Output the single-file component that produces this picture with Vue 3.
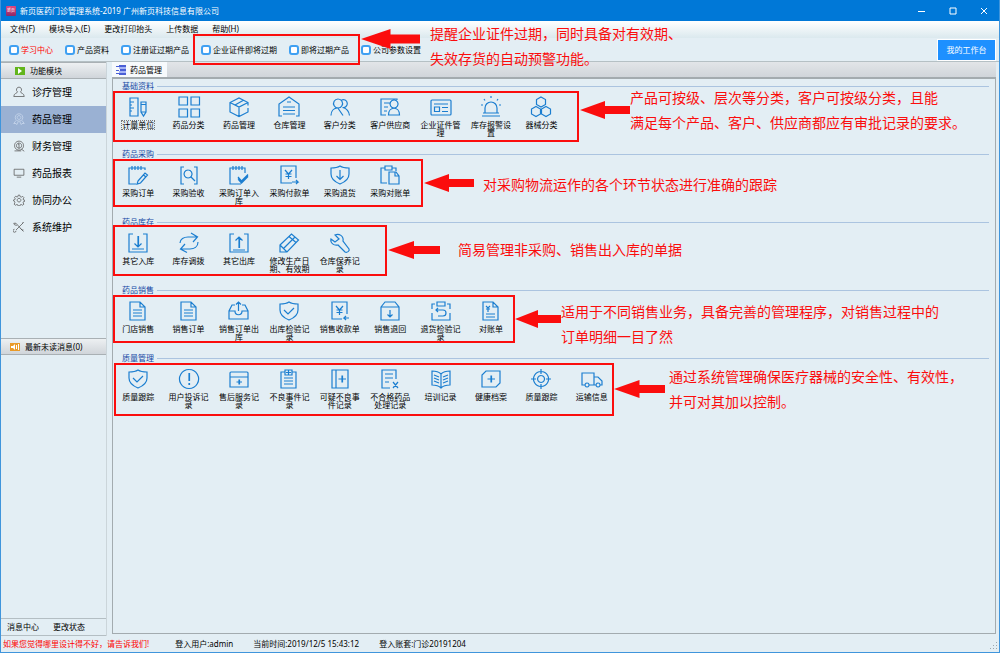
<script setup>
const menus = ['文件(F)', '模块导入(E)', '更改打印抬头', '上传数据', '帮助(H)']
const shortcuts = ['学习中心', '产品资料', '注册证过期产品', '企业证件即将过期', '即将过期产品', '公司参数设置']

const modules = [
  { name: '诊疗管理', d: 'M8 1.5a3.5 3.5 0 0 1 2 6.3c0 2 5 1.700 5 6.200H1c0-4.500 5-4.200 5-6.200a3.500 3.500 0 0 1 2-6.300z' },
  { name: '药品管理', active: true, d: 'M8 1a5 5 0 1 0 .1 0M8 3.500a2.500 2.500 0 1 0 .1 0M4 10l-3 4 3 0L5 15.500l2-4M12 10l3 4-3 0L11 15.500l-2-4' },
  { name: '财务管理', d: 'M8 1.500a6 6 0 1 0 .1 0M8 4a3.500 3.500 0 1 0 .1 0M8 5v6M6.500 6L8 5M11 12l4 3M2 14.500h9' },
  { name: '药品报表', d: 'M1.500 3h13v8h-13zM5 13.500h6' },
  { name: '协同办公', d: 'M7 1.500h2l.5 2 1.500.7 2-1 1.500 1.500-1 2 .5 1.300 2 .5v1l-2 .7-.5 1.500 1 1.800-1.500 1.500-2-1-1.500.5-.5 1.500H7l-.5-1.500-1.500-.5-2 1-1.500-1.500 1-1.800L2 9.700l-1.500-.7v-1L2.500 7.500 3 6.500 2 4.500 3.500 3l2 1L6.500 3.500zM8 5.700a2.500 2.500 0 1 0 .1 0' },
  { name: '系统维护', d: 'M1 3l3 0 8 9 2 0M14 2L4 12M12 3l2-1M10 10l4 4M2 11a2 2 0 1 0 2 2M1 3l1 2 3 1' }
]

const sheet = 'M2 1h10l5 5v13H2zM12 1v5h5'
const shield = 'M10 1c3 2 6 2 9 2v6c0 5-4 8-9 10C5 17 1 14 1 9V3c3 0 6 0 9-2z'

const groups = [
  {
    title: '基础资料',
    tools: [
      { name: '计量单位', focus: true, d: 'M2 1h8v18H2zM2 5h4M2 8h2M2 11h4M2 14h2M13 5h5v10l-2.500 4-2.500-4zM13 7.500h5M13 15h5' },
      { name: '药品分类', d: 'M0 0h8.500v8H0zM12 0h8.500v8H12zM0 12h8.500v8H0zM12 12h8.500v8H12z' },
      { name: '药品管理', d: 'M19 11v4l-9 4.500L1 15V5.500L10 1l9 4.500v3M1 5.500l9 4.500 9-4.500M10 10v9.500M6 8l8-4.500' },
      { name: '仓库管理', d: 'M3 19H0V7l10-7 10 7v12h-3M4 10h12M4 13.500h12M4 17h12M8 5h4' },
      { name: '客户分类', d: 'M8 2a4.500 4.500 0 1 0 .1 0M1 18.500c0-4 2.500-7 6-7.500M11.500 3a4 4 0 1 1 1 7.500M7.500 10.500L13 18.500M13 10.500c3.500 1 6 4 6.500 8' },
      { name: '客户供应商', d: 'M17 3V2H1v16h5M4 6h6M4 10h4M4 14h3M14 3a4 4 0 1 0 .1 0M8.500 18c0-9 11-9 11 0z' },
      { name: '企业证件管理', d: 'M1 3h18a1 1 0 0 1 1 1v13a1 1 0 0 1-1 1H1a1 1 0 0 1-1-1V4a1 1 0 0 1 1-1zM3 7h14M3.500 10h5v4.500h-5zM11 10.500h6M11 14.500h6' },
      { name: '库存报警设置', d: 'M4 16v-5a6 6 0 0 1 12 0v5M2 16h16M1 19h18M10-1v2M3 2l1 1.500M17 2l-1 1.500M0 8h2M18 8h2' },
      { name: '器械分类', d: 'M10 0l4.500 2.500v5L10 10 5.500 7.500v-5zM5 9.500l4.500 2.500v5L5 19.500.5 17v-5zM15 9.500l4.500 2.500v5L15 19.500 10.500 17v-5z' }
    ]
  },
  {
    title: '药品采购',
    tools: [
      { name: '采购订单', d: 'M17 5V3H1v16h7M4 1v4M7 1v4M10 1v4M13 1v4M10 16l7-8 2.500 2-7 8-3.500 1zM15.500 10l2.500 2' },
      { name: '采购验收', d: 'M5 2H2v17h3M15 2h3v17h-3M9 5a4 4 0 1 0 .1 0M12 12l4 4' },
      { name: '采购订单入库', d: 'M16 8V3H1v16h11M4 1v4M7 1v4M10 1v4M13 1v4M9 12l3.500 4L19 9.500M9 13l3.500 4L19 10.500M9 14l3.500 4L19 11.500' },
      { name: '采购付款单', d: 'M13 18H2V1h15v12M6 5l3.500 4L13 5M9.500 9v5M6.500 9h6M6.500 11.500h6M13 17h6l-2-2M19 17l-2 2' },
      { name: '采购退货', d: shield + 'M10 5v9M6.500 11l3.500 3.500 3.500-3.500' },
      { name: '采购对账单', d: 'M5 3H1v15h6M5 1h7v4H5zM12 3h4v3M9 7h7l3 4v8H9zM15 7v4h4' }
    ]
  },
  {
    title: '药品库存',
    tools: [
      { name: '其它入库', d: 'M5 1H1v18h18V1h-4M10 3v11M10.500 3v11M6.500 10.500L10 14l3.500-3.500M4 16h12' },
      { name: '库存调拨', d: 'M1 10c0-4 4-6 8-6h9M12 0l6.500 4L14 9M19 9c0 5-4 7-8 7H2M8 19.500L1.500 16 6 11' },
      { name: '其它出库', d: 'M5 1H1v18h18V1h-4M10 15V4M10.500 15V4M6.500 7.500L10 4l3.500 3.500M4 17h12' },
      { name: '修改生产日期、有效期', d: 'M1 12L12.500 1l7 6L8 19H1zM1 12l7 7M4.500 15.500L16 4M10 3.500l7 6' },
      { name: '仓库保养记录', d: 'M5 2c4-2 9 1 8 6l6 8c1 2-2 4-4 3l-7-7C4 13 0 10 1 6l4 3 4-3z' }
    ]
  },
  {
    title: '药品销售',
    tools: [
      { name: '门店销售', d: sheet + 'M5 9h9M5 12h9M5 15h9' },
      { name: '销售订单', d: sheet + 'M5 9h9M5 12h9M5 15h9' },
      { name: '销售订单出库', d: 'M6 4H3L0 10v8h19v-8l-3-6h-3M0 10h6c0 5 7 5 7 0h6M9.500 10V1M7 3.500L9.500 1 12 3.500' },
      { name: '出库检验记录', d: shield + 'M5 9l4 4 6-6' },
      { name: '销售收款单', d: 'M12 18H2V1h15v12M6 5l3.500 4L13 5M9.500 9v5M6.500 9h6M6.500 11.500h6M19 17h-5l2-2M14 17l2 2' },
      { name: '销售退回', d: 'M1 6l4-5h10l4 5v13H1zM1 6h18M10 9v7M7.500 13.500L10 16l2.500-2.500' },
      { name: '退货检验记录', d: 'M4 3H1v5M1 12v7h18v-7M19 8V3h-3M6 1h8v4H6zM5 9h7c4 0 4 6 0 6H7M7 7L5 9l2 2' },
      { name: '对账单', d: sheet + 'M5 5l2 2 2-2M7 7v4M5 8h4M5 13h9M5 16h9' }
    ]
  },
  {
    title: '质量管理',
    tools: [
      { name: '质量跟踪', d: shield + 'M5 9l4 4 6-6' },
      { name: '用户投诉记录', d: 'M10 .5a9.500 9.500 0 1 0 .1 0M10 4v8M10.500 4v8M10 14v2M10.500 14v2' },
      { name: '售后服务记录', d: 'M2 3h16a1 1 0 0 1 1 1v14H1V4a1 1 0 0 1 1-1zM1 8h18M10 10.500v5M10.500 10.500v5M7.500 13h5.500' },
      { name: '不良事件记录', d: 'M6 3H2v16h15V3h-4M6 1h7v5H6zM9.500 1v5M7 3.500h5M5 9h9M5 12h9M5 15h9' },
      { name: '可疑不良事件记录', d: 'M2 1h16v18H2zM6 1v18M12 6.500v7M12.500 6.500v7M8.500 10h7.500' },
      { name: '不合格药品处理记录', d: 'M10 19H2V1h14v9M5 5h8M5 9h8M5 13h4M13 13l5 6M18 13l-5 6' },
      { name: '培训记录', d: 'M10 5C7 2 4 2 1 2v14c3 0 6 0 9 3 3-3 6-3 9-3V2c-3 0-6 0-9 3zM10 5v14M3 6l5 2M3 9l5 2M3 12l5 2M17 6l-5 2M17 9l-5 2M17 12l-5 2' },
      { name: '健康档案', d: 'M5 2h14v12l-4 4H1V6zM10 6.500v7M10.500 6.500v7M6.500 10h7.500' },
      { name: '质量跟踪', d: 'M10 2.500a7.500 7.500 0 1 0 .1 0M10 6.500a3.500 3.500 0 1 0 .1 0M10 0v5M10 15v5M0 10h5M15 10h5' },
      { name: '运输信息', d: 'M3 16H0V4h12v12H7M12 8h4l4 4v4h-2M12 16h2M5 14a2 2 0 1 0 .1 0M16 14a2 2 0 1 0 .1 0' }
    ]
  }
]

const notes = [
  { id: 'expire', lines: ['提醒企业证件过期，同时具备对有效期、', '失效存货的自动预警功能。'] },
  { id: 'basic', lines: ['产品可按级、层次等分类，客户可按级分类，且能', '满足每个产品、客户、供应商都应有审批记录的要求。'] },
  { id: 'purchase', lines: ['对采购物流运作的各个环节状态进行准确的跟踪'] },
  { id: 'stock', lines: ['简易管理非采购、销售出入库的单据'] },
  { id: 'sales', lines: ['适用于不同销售业务，具备完善的管理程序，对销售过程中的', '订单明细一目了然'] },
  { id: 'quality', lines: ['通过系统管理确保医疗器械的安全性、有效性，', '并可对其加以控制。'] }
]
</script>

<template>
  <div class="window">
    <header class="titlebar">
      <span class="logo">新页</span>
      <h1>新页医药门诊管理系统-2019 广州新页科技信息有限公司</h1>
      <div class="controls">
        <button aria-label="最小化"><svg viewBox="0 0 10 10"><path d="M1 5.500h7" /></svg></button>
        <button aria-label="最大化"><svg viewBox="0 0 10 10"><path d="M2 2h6v6H2z" /></svg></button>
        <button aria-label="关闭"><svg viewBox="0 0 10 10"><path d="M2 2l6 6M8 2L2 8" /></svg></button>
      </div>
    </header>

    <nav class="menubar">
      <button v-for="m in menus" :key="m">{{ m }}</button>
    </nav>

    <div class="toolbar">
      <button v-for="(s, i) in shortcuts" :key="s" :class="{ hot: i === 0 }">
        <svg viewBox="0 0 10 10"><rect x="1" y="1" width="8" height="8" rx="2" /></svg>{{ s }}
      </button>
      <button class="desk">我的工作台</button>
    </div>

    <div class="body">
      <aside class="side">
        <h2 class="side-head">
          <svg viewBox="0 0 10 10"><path fill="#62b51b" d="M0 1h10v8H0z" /><path fill="#fff" d="M3 2l4 3-4 3z" /></svg>功能模块
        </h2>
        <nav class="modules">
          <button v-for="m in modules" :key="m.name" :class="{ active: m.active }">
            <svg viewBox="0 0 16 16"><path :d="m.d" /></svg>{{ m.name }}
          </button>
        </nav>
        <h2 class="side-head news">
          <svg viewBox="0 0 10 10"><path fill="#e99a28" d="M0 1h10v8H0z" /><path fill="#fff" d="M1 4h2l2-2v6L3 6H1zM6 3h1v4H6zM8 2h1v6H8z" /></svg>最新未读消息(0)
        </h2>
        <div class="messages"></div>
        <div class="side-foot">
          <button>消息中心</button>
          <button>更改状态</button>
        </div>
      </aside>

      <main class="work">
        <div class="tabs">
          <button class="tab">
            <svg viewBox="0 0 10 10"><path fill="#4a5fd6" d="M3 0h7v2H3zM4 4h6v2H4zM3 8h7v2H3zM0 1h3v1H0zM0 5h3v1H0zM0 8h3v1H0z" /><path fill="#a7b5f5" d="M3 2h7v2H3zM3 6h7v2H3z" /></svg>药品管理
          </button>
        </div>
        <div class="panel">
          <section v-for="g in groups" :key="g.title" class="group">
            <h3>{{ g.title }}</h3>
            <div class="tools">
              <button v-for="(t, i) in g.tools" :key="i" class="tool" :class="{ focus: t.focus }">
                <svg viewBox="0 0 20 20"><path :d="t.d" /></svg>
                <span>{{ t.name }}</span>
              </button>
            </div>
          </section>
        </div>
      </main>
    </div>

    <footer class="status">
      <span class="hot">如果您觉得哪里设计得不好，请告诉我们!</span>
      <span>登入用户:admin</span>
      <span>当前时间:2019/12/5 15:43:12</span>
      <span>登入账套:门诊20191204</span>
      <svg class="grip" viewBox="0 0 8 8"><path d="M6 0h1v1H6zM3 3h1v1H3zM6 3h1v1H6zM0 6h1v1H0zM3 6h1v1H3zM6 6h1v1H6z" /></svg>
    </footer>

    <template v-for="n in notes" :key="n.id">
      <div class="frame" :class="n.id"></div>
      <div class="note" :class="n.id">
        <svg viewBox="0 0 50 18" preserveAspectRatio="none"><path d="M0 9L25 0V5H50V13H25V18z" /></svg>
        <p><span v-for="l in n.lines" :key="l">{{ l }}</span></p>
      </div>
    </template>
  </div>
</template>

<style>
body {
  margin: 0;
}
</style>

<style scoped>
* {
  box-sizing: border-box;
}
.window {
  position: relative;
  display: flex;
  flex-direction: column;
  min-height: 100vh;
  overflow: hidden;
  border: solid #3f95dc;
  border-width: 0 1px 1px;
  background: #e3eef4;
  color: #000;
  font: 8px/12px "Noto Sans", "Noto Sans CJK SC", sans-serif;
}
button {
  display: flex;
  align-items: center;
  padding: 0;
  border: 0;
  background: none;
  color: inherit;
  font: inherit;
  white-space: nowrap;
}
h1, h2, h3, p {
  margin: 0;
  font: inherit;
}
svg {
  display: block;
  flex: none;
}
.hot {
  color: #f00;
}

.titlebar {
  display: flex;
  align-items: center;
  height: 21px;
  padding-left: 5px;
  background: #0078d7;
  color: #fff;
}
.logo {
  width: 10px;
  height: 10px;
  margin-right: 4px;
  border-radius: 1px;
  background: linear-gradient(#e2457f, #8c2a68);
  font-size: 4px;
  line-height: 10px;
  text-align: center;
}
.controls {
  display: flex;
  margin-left: auto;
}
.controls button {
  width: 31px;
  justify-content: center;
}
.controls svg {
  width: 10px;
  height: 10px;
  fill: none;
  stroke: #fff;
}

.menubar {
  display: flex;
  gap: 14px;
  height: 17px;
  padding: 0 0 2px 9px;
  background: linear-gradient(#fff, #dbe9ee);
}
.toolbar {
  display: flex;
  align-items: center;
  gap: 12px;
  height: 24px;
  padding: 0 3px 0 8px;
  border-bottom: 1px solid #b5c0c4;
}
.toolbar svg {
  width: 10px;
  height: 10px;
  margin-right: 2px;
  fill: #fff;
  stroke: #3fa0f2;
  stroke-width: 2;
}
.toolbar .desk {
  justify-content: center;
  width: 59px;
  height: 22px;
  margin-left: auto;
  border: 1px solid #fff;
  background: #1e90ff;
  color: #fff;
}

.body {
  display: flex;
  flex: 1;
}
.side {
  display: flex;
  flex-direction: column;
  width: 106px;
  border-right: 1px solid #cbd5da;
}
.side-head {
  display: flex;
  align-items: center;
  height: 17px;
  padding-left: 14px;
  border: solid #a9b0b4;
  border-width: 1px 0;
  background: linear-gradient(#edf0f2, #d0d5da);
}
.side-head.news {
  padding-left: 9px;
}
.side-head svg {
  width: 10px;
  height: 10px;
  margin-right: 5px;
}
.messages {
  flex: 1;
}
.modules {
  height: 259px;
}
.modules button {
  width: 100%;
  height: 27px;
  padding: 0 0 2px 12px;
  font-size: 10px;
}
.modules .active {
  background: #9ab1d3;
}
.modules svg {
  width: 12px;
  height: 12px;
  margin-right: 7px;
  fill: none;
  stroke: #555;
}
.modules .active svg {
  stroke: #cbd9ee;
}
.side-foot {
  display: flex;
  gap: 14px;
  height: 18px;
  padding-left: 6px;
  border: solid #b4bec3;
  border-width: 1px 0;
}

.work {
  display: flex;
  flex: 1;
  flex-direction: column;
  padding: 0 3px 2px 5px;
}
.tabs {
  display: flex;
  height: 15px;
  background: linear-gradient(#e2e5e8, #d0d5da);
}
.tab {
  height: 15px;
  padding: 0 5px 0 4px;
  background: #f7fafc;
}
.tab svg {
  width: 10px;
  height: 10px;
  margin-right: 4px;
}
.panel {
  flex: 1;
  padding: 1px 6px 0 0;
  border: 1px solid #a3abaf;
  border-top-width: 2px;
}
.group {
  height: 68px;
}
.group h3 {
  display: flex;
  align-items: center;
  gap: 3px;
  padding-left: 9px;
  color: #1649a5;
}
.group h3::after {
  content: "";
  flex: 1;
  height: 1px;
  background: #abc4e0;
}
.tools {
  display: grid;
  grid-template-columns: repeat(10, 1fr);
  width: 504px;
  padding-top: 5px;
}
.tool {
  flex-direction: column;
  justify-content: flex-start;
}
.tool svg {
  width: 20px;
  height: 20px;
  overflow: visible;
  fill: none;
  stroke: #1b7ed0;
  stroke-width: 1.2;
}
.tool span {
  max-width: 42px;
  margin-top: 4px;
  line-height: 8px;
  white-space: normal;
  text-align: center;
}
.tool.focus span {
  outline: 1px dotted #777;
}

.status {
  display: flex;
  align-items: center;
  height: 16px;
  padding-left: 2px;
}
.status span {
  margin-right: 20px;
}
.status .hot {
  margin-right: 26px;
}
.grip {
  width: 8px;
  height: 8px;
  margin: 4px 1px 0 auto;
  fill: #9aa6ad;
}

/* Red call-outs lying over the window */
.frame {
  position: absolute;
  border: 2px solid #fb0d0d;
  pointer-events: none;
}
.frame.expire { left: 192px; top: 34px; width: 167px; height: 31px; }
.frame.basic { left: 112px; top: 91px; width: 466px; height: 51px; }
.frame.purchase { left: 112px; top: 159px; width: 310px; height: 48px; }
.frame.stock { left: 112px; top: 225px; width: 274px; height: 51px; }
.frame.sales { left: 112px; top: 295px; width: 402px; height: 48px; }
.frame.quality { left: 113px; top: 363px; width: 500px; height: 53px; }
.note {
  position: absolute;
  display: flex;
  align-items: flex-start;
  color: #fb0d0d;
  font-size: 14px;
  line-height: 25px;
  white-space: nowrap;
  pointer-events: none;
}
.note svg {
  width: 50px;
  height: 18px;
  fill: #fb0d0d;
}
.note span {
  display: block;
}
.note.expire { left: 360px; top: 21px; }
.note.expire svg { width: 59px; height: 20px; margin: 8px 10px 0 0; }
.note.basic { left: 579px; top: 85px; }
.note.basic svg { margin-top: 16px; }
.note.purchase { left: 423px; top: 172px; }
.note.purchase svg { margin: 2px 9px 0 0; }
.note.stock { left: 387px; top: 237px; }
.note.stock svg { width: 52px; margin: 4px 18px 0 0; }
.note.sales { left: 514px; top: 299px; }
.note.sales svg { width: 46px; margin-top: 11px; }
.note.quality { left: 613px; top: 364px; }
.note.quality svg { width: 51px; margin: 16px 4px 0 0; }
</style>
